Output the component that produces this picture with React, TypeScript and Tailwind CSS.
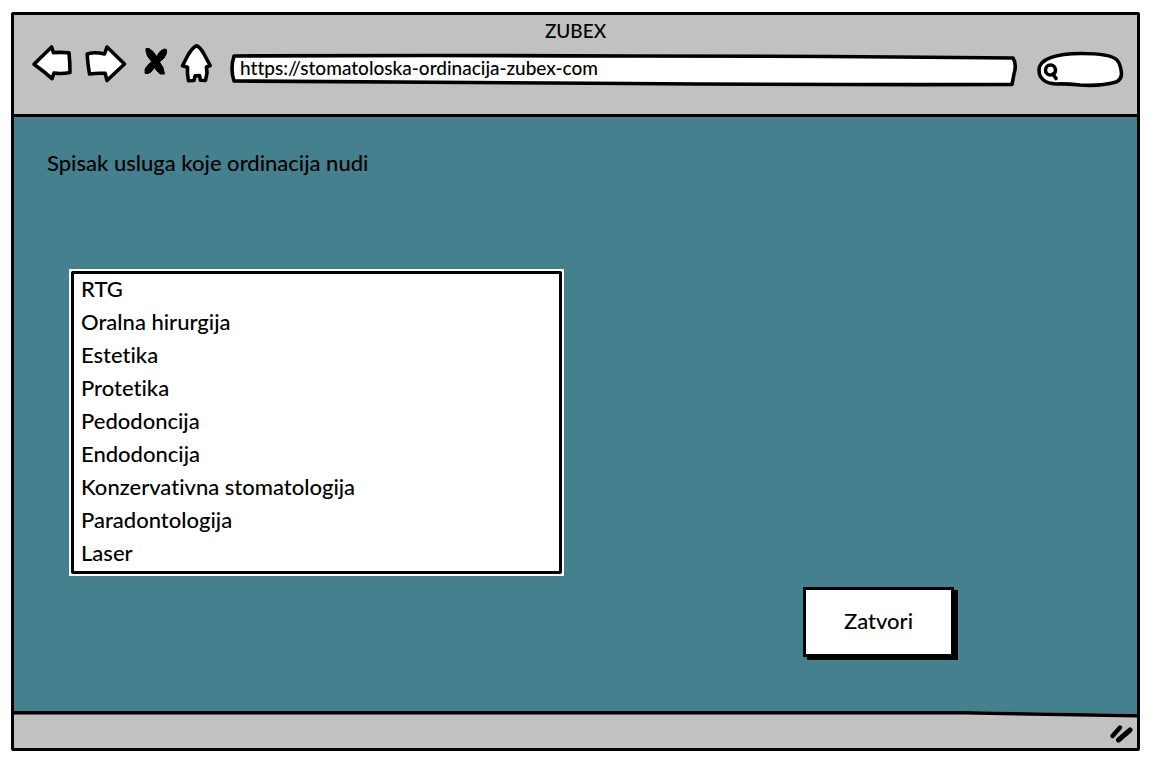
import { useState } from "react";
import type { ReactNode } from "react";

const services = [
  "RTG",
  "Oralna hirurgija",
  "Estetika",
  "Protetika",
  "Pedodoncija",
  "Endodoncija",
  "Konzervativna stomatologija",
  "Paradontologija",
  "Laser",
];

function ToolButton({ label, className, children }: { label: string; className: string; children: ReactNode }) {
  return (
    <button type="button" aria-label={label} className={`shrink-0 ${className}`}>
      {children}
    </button>
  );
}

const outline = {
  fill: "white",
  stroke: "black",
  strokeWidth: 3.6,
  strokeLinejoin: "round" as const,
  strokeLinecap: "round" as const,
};

function BackIcon() {
  return (
    <svg width="44" height="46" viewBox="0 0 44 46" {...outline}>
      <path d="M4 22.3L21.6 5L23.4 10.6Q31 10 39 10.8Q40 21 40 30.6Q31 32.2 24 31L22 36.6Q14 29.5 4 22.3Z" />
    </svg>
  );
}

function ForwardIcon() {
  return (
    <svg width="44" height="46" viewBox="0 0 44 46" {...outline}>
      <path d="M5 11.4Q12 10 20.5 12L23 5L40.5 22L23 38.5L21.2 31.4Q13 31 5.5 32Q3.5 20 3.2 12Z" />
    </svg>
  );
}

function StopIcon() {
  return (
    <svg width="26" height="46" viewBox="0 0 26 46" fill="black" stroke="black" strokeLinejoin="round">
      <path d="M3 6.500L6 6.500L10 9.500L13.500 14.500L17 9.500L21 7L23.500 7.500L23.500 11.500L21 16L16.500 20L20 25.500L21.500 32L17 32L13.500 28.500L11.500 25.500L8 30L5 31.500L2.200 31.500L2 27L5 23L8.500 19.500L4.500 14L3 9.500Z" />
    </svg>
  );
}

function HomeIcon() {
  return (
    <svg width="38" height="46" viewBox="0 0 38 46" {...outline}>
      <path d="M18.5 3.8Q22 5 26 12L32.2 23.5L28.4 25L29 31L27.500 38.5L22.5 38.3L21.500 33.5L17 33.8L16 38.5L10.500 38.8L9.500 32L9.500 25.2L4.500 23.8L10 13Q15 5 18.5 3.8Z" />
    </svg>
  );
}

export default function App() {
  const [address, setAddress] = useState("https://stomatoloska-ordinacija-zubex-com");
  const [query, setQuery] = useState("");

  return (
    <div className="flex min-h-screen flex-col bg-white pt-3 pr-[22px] pb-[13px] pl-[11px] font-['Lato','Liberation_Sans',sans-serif] font-medium text-black [font-variant-ligatures:none]">
      <div className="flex flex-1 flex-col rounded-[2px] border-[3px] border-black bg-[#45808e]">
        <header className="border-b-[3px] border-black bg-[#c1c1c1] pb-[26px]">
          <h1 className="pt-1 text-center text-[19px] leading-[23px]">ZUBEX</h1>
          <div className="flex pr-[13px] pl-4">
            <ToolButton label="Nazad" className="mr-[10px]">
              <BackIcon />
            </ToolButton>
            <ToolButton label="Napred" className="mr-[15px]">
              <ForwardIcon />
            </ToolButton>
            <ToolButton label="Zaustavi" className="mr-[9px]">
              <StopIcon />
            </ToolButton>
            <ToolButton label="Početna" className="mr-[13px]">
              <HomeIcon />
            </ToolButton>
            <div className="relative mr-[18px] h-[46px] min-w-0 flex-1">
              <svg className="absolute inset-0 h-full w-full" viewBox="0 0 789 46" preserveAspectRatio="none" aria-hidden="true" {...outline}>
                <path vectorEffect="non-scaling-stroke" d="M5 14Q200 13 400 14Q620 14 784 16Q788 22 785 32L783 42.5Q600 43 400 41.5Q200 41 5 39Q1 27 5 14Z" />
              </svg>
              <input
                type="text"
                aria-label="Adresa"
                value={address}
                onChange={(e) => setAddress(e.target.value)}
                className="relative mt-[14px] block h-6 w-full bg-transparent px-[11px] text-[19px] outline-none"
              />
            </div>
            <div className="relative h-[46px] w-[88px] shrink-0">
              <svg className="absolute inset-0" width="88" height="46" viewBox="0 0 88 46" aria-hidden="true" {...outline}>
                <path d="M3 28C3 17 20 11.5 45 11.5C62 11.5 76 13 81 18Q85 23 85.5 32Q85 38 80 40Q64 44.5 44 43Q30 41.5 20 42C10 41.5 3 37 3 28Z" />
                <circle cx="14.5" cy="28" r="5" />
                <path d="M17 32L20 36.5" />
              </svg>
              <input
                type="search"
                aria-label="Pretraga"
                value={query}
                onChange={(e) => setQuery(e.target.value)}
                className="relative mt-4 ml-6 block h-6 w-14 bg-transparent text-[19px] outline-none"
              />
            </div>
          </div>
        </header>

        <main className="flex flex-1 flex-col items-start px-[33px] pt-8 text-[22px]">
          <h2 className="leading-[27px]">Spisak usluga koje ordinacija nudi</h2>
          <div className="mt-[93px] ml-[22px] w-[495px] max-w-full border-2 border-white bg-white">
            <ul className="rounded-[2px] border-[3px] border-black px-[7px]">
              {services.map((service) => (
                <li key={service} className="h-[33px] leading-[29px]">
                  {service}
                </li>
              ))}
            </ul>
          </div>
          <button
            type="button"
            className="mt-[11px] mr-[150px] mb-12 h-[70px] w-[151px] self-end border-[3px] border-black bg-white pb-[3px] shadow-[4px_3px_0_#000]"
          >
            Zatvori
          </button>
        </main>

        <footer className="flex h-[37px] flex-col bg-[#c1c1c1]">
          <svg className="block h-[7px] w-full shrink-0" viewBox="0 0 1123 7" preserveAspectRatio="none" aria-hidden="true">
            <path d="M0 0H1123V3L950 0Z" fill="#45808e" />
            <path d="M0 0H950L1123 3V6.5L950 3.5H0Z" fill="black" />
          </svg>
          <svg className="mt-1 mr-1 self-end" width="26" height="22" viewBox="0 0 26 22" aria-hidden="true" stroke="black" strokeLinecap="round">
            <path d="M5.5 14L13 5.500" strokeWidth="4.4" />
            <path d="M11.500 18L23 8" strokeWidth="5" />
          </svg>
        </footer>
      </div>
    </div>
  );
}
